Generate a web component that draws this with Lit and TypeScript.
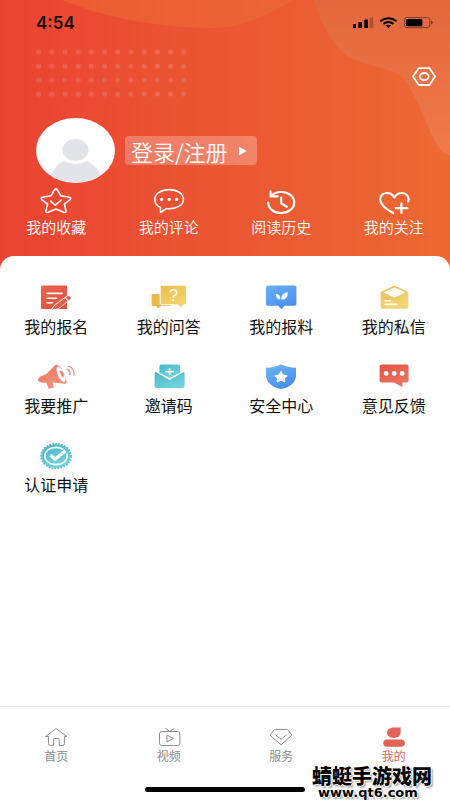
import { LitElement, html, css, svg, TemplateResult } from "lit";
import { customElement } from "lit/decorators.js";
import { classMap } from "lit/directives/class-map.js";

interface Item {
  label: string;
  icon: TemplateResult;
}

const gradient = (id: string, from: string, to: string) => svg`
  <defs>
    <linearGradient id=${id} x1="0" y1="0" x2="0.6" y2="1">
      <stop offset="0" stop-color=${from}></stop>
      <stop offset="1" stop-color=${to}></stop>
    </linearGradient>
  </defs>`;

const quickItems: Item[] = [
  {
    label: "我的收藏",
    icon: svg`
      <path d="M16.2 2.2Q18 0 19.6 2.2L22.8 7.8L31.4 9.2Q33.6 10 32 11.6L26.4 16.2L28 23Q27.8 25 25.6 24.2L18 21L10.2 24.2Q8 25 7.8 23L9.6 16.2L3.8 11.6Q2.4 10 4.4 9.2L13 7.8Z"></path>
      <path d="M12.6 13.2L17.2 17.2L23.4 12"></path>`,
  },
  {
    label: "我的评论",
    icon: svg`
      <path d="M9.4 19.4C5.6 17.6 3.8 14.6 3.8 11.4C3.8 5.8 10 1.6 18.2 1.6S32.4 5.8 32.4 11.4S26 20.8 18.2 20.8C17 20.8 16 20.8 15.2 20.6L9.6 24.4Z"></path>
      <g class="solid"><circle cx="10.6" cy="11.4" r="1.6"></circle><circle cx="18.2" cy="11.4" r="1.6"></circle><circle cx="25.6" cy="11.4" r="1.6"></circle></g>`,
  },
  {
    label: "阅读历史",
    icon: svg`
      <g class="thick">
        <path d="M5.2 14.6C5.2 20.6 11 25 18.2 25S31.2 20.4 31.2 14.4S25.4 4 18.2 4C14.2 4 10.6 5.4 8.2 7.8"></path>
        <path d="M7.6 3.4V8.4H14.6"></path>
        <path d="M18.2 9.6V15.2L23.8 18.8"></path>
      </g>`,
  },
  {
    label: "我的关注",
    icon: svg`
      <g class="thick">
        <path d="M17.2 25C11 21.6 4.2 17 4.2 11.4C4.2 7.4 7.4 5 11 5C14.4 5 16.8 6.8 18.4 9.4C20 6.8 22.6 5 25.8 5C29.6 5 32.6 7.6 32.6 11C32.6 12 32.4 12.8 32 13.6"></path>
        <path d="M25.4 15.4V25M19.6 20.2H31.4"></path>
      </g>`,
  },
];

const menuItems: Item[] = [
  {
    label: "我的报名",
    icon: svg`${gradient("sign", "#e9664f", "#e4513e")}
      <path fill="url(#sign)" d="M4 1.4H28Q29 1.4 29 2.4V25H4Q3 25 3 24V2.4Q3 1.4 4 1.4Z"></path>
      <path class="line" d="M9 9.4H24M9 14.2H18.6M9 18.8H14.6"></path>
      <path d="M13.6 26L17 21.4L29.6 12L32.8 14.6L20.4 24.2L16.6 26.4Z" fill="#fff" stroke="#fff" stroke-width="1.6"></path>
      <path d="M14 25.6L17.2 21.2L27 14L29.8 17L20.2 24.4ZM27.8 13.6L29.8 12Q33 12.2 32.8 14.6L30.6 16.4Z" fill="#e4604c"></path>`,
  },
  {
    label: "我的问答",
    icon: svg`${gradient("qa", "#eebc4c", "#f4d36c")}
      <path fill="#ecb94d" d="M2 10H18Q19.6 10 19.6 11.6V22H10L7.4 24.4L5 22H2Q0.6 22 0.6 20.6V11.4Q0.6 10 2 10Z"></path>
      <path fill="url(#qa)" stroke="#fff" stroke-width="1" d="M11 1.2H34Q35.4 1.2 35.4 2.8V19Q35.4 20.8 34 20.8H32.4L29.6 23.4L26.6 20.8H11Q9.2 20.8 9.2 19V2.8Q9.2 1.2 11 1.2Z"></path>
      <text class="mark" x="22.4" y="17" text-anchor="middle">?</text>`,
  },
  {
    label: "我的报料",
    icon: svg`${gradient("tip", "#68b1f4", "#4c8ff0")}
      <path fill="url(#tip)" d="M5 1.4H31.6Q33.4 1.4 33.4 3.2V20Q33.4 21.8 31.6 21.8H21.6L18.4 25.2L15.2 21.8H5Q3 21.8 3 20V3.2Q3 1.4 5 1.4Z"></path>
      <path fill="#fff" d="M18.4 15.6C18 11 20.6 8.6 24.8 8.2C25 12.8 22.6 15.8 18.4 15.6ZM17.2 15.4C14 15.4 12.6 13 12.8 9.8C15.8 10 17.6 12 17.2 15.4Z"></path>`,
  },
  {
    label: "我的私信",
    icon: svg`${gradient("mail", "#edbd53", "#f5d677")}
      <path fill="url(#mail)" d="M17 2.2Q18.6 1.2 20 2.2L31 7.2Q32.4 8 32.4 9.6V22.6Q32.4 24.8 30.2 24.8H6.8Q4.6 24.8 4.6 22.6V9.6Q4.6 8 6 7.2Z"></path>
      <path fill="#fff" d="M18.4 3.4L29.6 8.4L18.4 13.6L7.2 8.4Z"></path>
      <path class="line" d="M9 16.8H14.6M9 20.4H20.6"></path>`,
  },
  {
    label: "我要推广",
    icon: svg`${gradient("horn", "#ea7663", "#ef927f")}
      <path fill="url(#horn)" d="M2 13.8L8.6 10.8L17.4 2C21.6 -0.4 28.4 12 28.6 19.6Q28.4 21.2 26.4 20.8L14.6 19.6L16 24.4L10.6 25.8L8.4 19.8L3.4 19.4Q-3 18 2 13.8Z"></path>
      <ellipse cx="23" cy="11.2" rx="3.2" ry="8.4" transform="rotate(-24 23 11.2)" fill="#fff"></ellipse>
      <path d="M21.4 7.4Q27.4 8.4 25.4 15Q22.4 12.4 21.4 7.4Z" fill="#ec806d"></path>
      <path d="M29 6.2Q32.6 7.6 31.8 11.6M30 3Q37 5.4 36 12.2" fill="none" stroke="#ee8f7e" stroke-width="1.3" stroke-linecap="round"></path>`,
  },
  {
    label: "邀请码",
    icon: svg`${gradient("invite", "#46b8cb", "#70d3dc")}
      <path fill="url(#invite)" d="M10.4 1.4H27Q29 1.4 29 3.4V9.8L18.6 14.8L8.4 9.8V3.4Q8.4 1.4 10.4 1.4Z"></path>
      <path fill="url(#invite)" d="M4.6 9L18.6 17L32.4 9Q33.6 9 33.6 10.2V23Q33.6 25 31.6 25H5.6Q3.6 25 3.6 23V10.2Q3.6 9 4.6 9Z"></path>
      <path class="line" d="M18.6 5.6V11.8M14.8 8.6H22.4"></path>`,
  },
  {
    label: "安全中心",
    icon: svg`${gradient("shield", "#70b9f4", "#478cf0")}
      <path fill="url(#shield)" d="M18 1.2Q24 4.4 33 4.8V13Q32 23.2 18 26Q4 23.2 3 13V4.8Q12 4.4 18 1.2Z"></path>
      <path fill="#fff" stroke="#fff" stroke-linejoin="round" d="M18 8.4L20 12L24.2 12.8L21.4 15.4L22 19L18 17.2L14 19L14.6 15.4L11.8 12.8L16 12Z"></path>`,
  },
  {
    label: "意见反馈",
    icon: svg`${gradient("feedback", "#e4523f", "#ea7464")}
      <path fill="url(#feedback)" d="M5.6 1.4H30.6Q32.6 1.4 32.6 3.4V17.4Q32.6 19.4 30.6 19.4H26.4V24L18 19.4H5.6Q3.6 19.4 3.6 17.4V3.4Q3.6 1.4 5.6 1.4Z"></path>
      <g fill="#fff"><circle cx="10.2" cy="10.4" r="2.4"></circle><circle cx="18.2" cy="10.4" r="2.4"></circle><circle cx="26.2" cy="10.4" r="2.4"></circle></g>`,
  },
  {
    label: "认证申请",
    icon: svg`${gradient("cert", "#45b3c4", "#78d4dc")}
      <ellipse cx="18" cy="14" rx="14.6" ry="12" fill="url(#cert)"></ellipse>
      <ellipse cx="18" cy="14" rx="15" ry="12.2" fill="none" stroke="#5cc2cf" stroke-width="1.8" stroke-dasharray="1.8 1.2"></ellipse>
      <path d="M28.8 11.6C30.6 17.6 25.6 22.6 18 22.6C11.6 22.6 6.8 18.8 6.8 14S11.6 5.4 18 5.4C21 5.4 23.4 6.2 25.4 7.4" fill="none" stroke="#fff" stroke-width="1.6"></path>
      <path d="M12.4 13L17 17.2L27.4 8.8" fill="none" stroke="#fff" stroke-width="3.2"></path>`,
  },
];

const tabs: (Item & { active?: boolean })[] = [
  {
    label: "首页",
    icon: svg`<path d="M4.5 9.5H1.5L12.2 1.5L22.8 9.5H20.4V16.6Q20.4 18.4 18.6 18.4H15.2V12.6Q15.2 11.4 14 11.4H10.8Q9.6 11.4 9.6 12.6V18.4H6.2Q4.5 18.4 4.5 16.6Z"></path>`,
  },
  {
    label: "视频",
    icon: svg`<rect x="2.5" y="4.5" width="20.4" height="14" rx="2.4"></rect><path d="M8.4 1.4L12.8 4.4L17.2 1.4M10 8L16.4 11.4L10 15Z"></path>`,
  },
  {
    label: "服务",
    icon: svg`<path d="M6.4 2.4H17.6Q18.6 2.4 19.2 3.2L22.4 7.4Q22.8 8.2 22 9L12 17.8L1.8 9Q1.2 8.2 1.6 7.4L4.8 3.2Q5.4 2.4 6.4 2.4ZM6.6 7.8L12 12.4L17.6 7.8"></path>`,
  },
  {
    label: "我的",
    active: true,
    icon: svg`<g class="fill"><path d="M11.8 0.6H18.6V5.8C18.6 8.8 15.6 11 11.8 11S5 8.8 5 5.8S8 0.6 11.8 0.6Z"></path><rect x="1.2" y="12.4" width="21.6" height="7.4" rx="3.7"></rect></g>`,
  },
];

@customElement("app-root")
export class AppRoot extends LitElement {
  static styles = css`
    :host {
      display: flex;
      flex-direction: column;
      position: relative;
      min-height: 100vh;
      background: #fff;
      font-family: "Noto Sans CJK SC", "Noto Sans", sans-serif;
    }
    * { box-sizing: border-box; }
    svg { display: block; flex: none; overflow: visible; }
    button {
      border: 0;
      padding: 0;
      background: none;
      font: inherit;
      color: inherit;
      cursor: pointer;
    }
    .hero {
      position: relative;
      background: linear-gradient(90deg, #ea4332, #eb5733 50%, #ed6932);
      color: #fff;
      padding-bottom: 35px;
    }
    .backdrop {
      position: absolute;
      inset: 0;
      width: 100%;
      height: 100%;
      overflow: hidden;
    }
    .status {
      position: relative;
      display: flex;
      align-items: center;
      justify-content: space-between;
      height: 46px;
      padding: 0 16px 0 36px;
      color: #1b0805;
      font: 600 17px/20px Inter, sans-serif;
    }
    .tools {
      position: relative;
      display: flex;
      justify-content: flex-end;
      padding: 20px 14px 32px;
    }
    .profile {
      position: relative;
      display: flex;
      align-items: center;
      gap: 10px;
      padding-left: 36px;
    }
    .login {
      display: flex;
      align-items: center;
      gap: 10px;
      height: 29px;
      padding: 0 10px 0 6px;
      border-radius: 4px;
      background: rgba(255, 255, 255, 0.26);
      font-size: 22px;
      font-weight: 350;
      line-height: 26px;
    }
    .grid {
      display: grid;
      grid-template-columns: repeat(4, 1fr);
    }
    .cell {
      display: flex;
      flex-direction: column;
      align-items: center;
    }
    .quick {
      position: relative;
      padding-top: 5px;
    }
    .quick .cell {
      font-size: 15px;
      font-weight: 350;
      line-height: 21px;
    }
    .quick svg {
      fill: none;
      stroke: #fff;
      stroke-width: 1.6;
      stroke-linejoin: round;
      stroke-linecap: round;
    }
    .quick .thick { stroke-width: 2.2; }
    .quick .solid { fill: #fff; stroke: none; }
    .sheet {
      position: relative;
      flex: 1;
      margin-top: -16px;
      padding-top: 28px;
      border-radius: 14px 14px 0 0;
      background: #fff;
    }
    .menu { row-gap: 26px; }
    .menu .cell {
      gap: 3px;
      color: #111;
      font-size: 16px;
      line-height: 22px;
    }
    .line {
      fill: none;
      stroke: #fff;
      stroke-width: 1.6;
      stroke-linecap: round;
    }
    .mark {
      fill: #fff;
      font: 17px "Liberation Sans", sans-serif;
    }
    .tabs {
      border-top: 1px solid #eee;
      padding: 20px 0 8px;
    }
    .tab {
      color: #8d8d8d;
      font-size: 12px;
      line-height: 18px;
      text-decoration: none;
    }
    .tab svg {
      fill: none;
      stroke: currentColor;
      stroke-width: 1;
      stroke-linejoin: round;
    }
    .tab .fill { fill: currentColor; stroke: none; }
    .tab.active { color: #e36457; }
    .indicator {
      width: 160px;
      height: 5px;
      margin: 22px auto 0;
      border-radius: 3px;
      background: #000;
    }
    .watermark {
      position: absolute;
      right: 18px;
      bottom: 0;
      display: flex;
      flex-direction: column;
      color: #000;
      font-weight: 900;
      font-size: 20px;
      line-height: 20px;
      text-shadow: 1px 0 #fff, -1px 0 #fff, 0 1px #fff, 0 -1px #fff, 2px 2px 2px #999;
    }
    .url {
      padding-left: 6px;
      font: 700 13px/14px "DejaVu Sans", sans-serif;
    }
  `;

  private renderBackdrop() {
    const rows = [52, 66, 80, 94];
    const columns = Array.from({ length: 12 }, (_, i) => 38.6 + i * 13.2);
    return html`<svg class="backdrop" viewBox="0 0 450 272" preserveAspectRatio="none" aria-hidden="true">
      <defs>
        <linearGradient id="wave" x1="0" y1="0" x2="0" y2="1">
          <stop offset="0" stop-color="#e2683d"></stop>
          <stop offset="1" stop-color="#f07a4b"></stop>
        </linearGradient>
        <linearGradient id="dome" x1="0" y1="0" x2="1" y2="0">
          <stop offset="0" stop-color="#ec5c34"></stop>
          <stop offset="1" stop-color="#eb6636"></stop>
        </linearGradient>
      </defs>
      <path fill="url(#dome)" d="M62 0C102 17 160 28 212 28C246 28 272 12 294 0Z"></path>
      <path fill="url(#wave)" d="M314 0C320 24 334 46 347 56C362 65 386 66 401 76C417 92 426 128 439 148Q444 155 450 155V0Z"></path>
      <g fill="#fff" fill-opacity="0.13">
        ${rows.map((y) => columns.map((x) => svg`<circle cx=${x} cy=${y} r="2.6"></circle>`))}
      </g>
    </svg>`;
  }

  private renderStatus() {
    return html`<div class="status">
      <span>4:54</span>
      <svg width="82" height="12" viewBox="0 0 82 12" aria-hidden="true">
        <rect x="1" y="7" width="3" height="4" rx="0.6"></rect>
        <rect x="6.3" y="5" width="3.7" height="6" rx="0.6"></rect>
        <rect x="12.3" y="2.6" width="3.7" height="8.4" rx="0.6"></rect>
        <rect x="17.6" y="0.4" width="3.7" height="10.6" rx="0.6" opacity="0.25"></rect>
        <g fill="none" stroke="#000" stroke-width="2">
          <path d="M28.2 4.2Q36.4 -1.8 44.6 4.2"></path>
          <path d="M31.4 6.8Q36.4 3.4 41.4 6.8"></path>
        </g>
        <path d="M33.6 8.6Q36.4 7 39.2 8.6L36.4 11Z"></path>
        <rect x="52.5" y="0.6" width="25.4" height="10" rx="2.4" fill="none" stroke="#000" stroke-opacity="0.45"></rect>
        <rect x="54" y="2" width="16.4" height="7.2" rx="1"></rect>
        <path d="M79 3.8Q81 4.4 81 5.6T79 7.4Z" opacity="0.5"></path>
      </svg>
    </div>`;
  }

  render() {
    return html`
      <header class="hero">
        ${this.renderBackdrop()} ${this.renderStatus()}
        <div class="tools">
          <button aria-label="设置">
            <svg width="24" height="20" viewBox="0 0 24 20" fill="none" stroke="#fff" stroke-width="1.8" stroke-linejoin="round">
              <path d="M6.8 2.2H17.6L23 10.6L17.6 19H6.8L1 10.6Z"></path>
              <ellipse cx="12.2" cy="10.6" rx="4.4" ry="3.6"></ellipse>
            </svg>
          </button>
        </div>
        <div class="profile">
          <svg width="79" height="65" viewBox="0 0 79 65" aria-hidden="true">
            <defs><clipPath id="face"><ellipse cx="39.5" cy="32.5" rx="39" ry="32"></ellipse></clipPath></defs>
            <ellipse cx="39.5" cy="32.5" rx="39.5" ry="32.5" fill="#fff"></ellipse>
            <g fill="#e3e4ea" clip-path="url(#face)">
              <ellipse cx="39.5" cy="32" rx="13" ry="11"></ellipse>
              <path d="M14 60C17 51 22 46 28 43Q39.5 49 51 43C57 46 63 51 66 60V65H14Z"></path>
            </g>
          </svg>
          <button class="login">
            <span>登录/注册</span>
            <svg width="9" height="10" viewBox="0 0 9 10" fill="#fff"><path d="M1 0.4L8.6 5L1 9.6Z"></path></svg>
          </button>
        </div>
        <div class="quick grid">
          ${quickItems.map(
            (item) => html`<button class="cell">
              <svg width="36" height="28" viewBox="0 0 36 28" aria-hidden="true">${item.icon}</svg>
              <span>${item.label}</span>
            </button>`
          )}
        </div>
      </header>
      <main class="sheet">
        <div class="menu grid">
          ${menuItems.map(
            (item) => html`<button class="cell">
              <svg width="36" height="28" viewBox="0 0 36 28" aria-hidden="true">${item.icon}</svg>
              <span>${item.label}</span>
            </button>`
          )}
        </div>
      </main>
      <nav class="tabs">
        <div class="grid">
          ${tabs.map(
            (tab) => html`<a href="#" class=${classMap({ cell: true, tab: true, active: !!tab.active })}>
              <svg width="24" height="20" viewBox="0 0 24 20" aria-hidden="true">${tab.icon}</svg>
              <span>${tab.label}</span>
            </a>`
          )}
        </div>
        <div class="indicator"></div>
      </nav>
      <div class="watermark">
        <span>蜻蜓手游戏网</span>
        <span class="url">www.qt6.com</span>
      </div>
    `;
  }
}
